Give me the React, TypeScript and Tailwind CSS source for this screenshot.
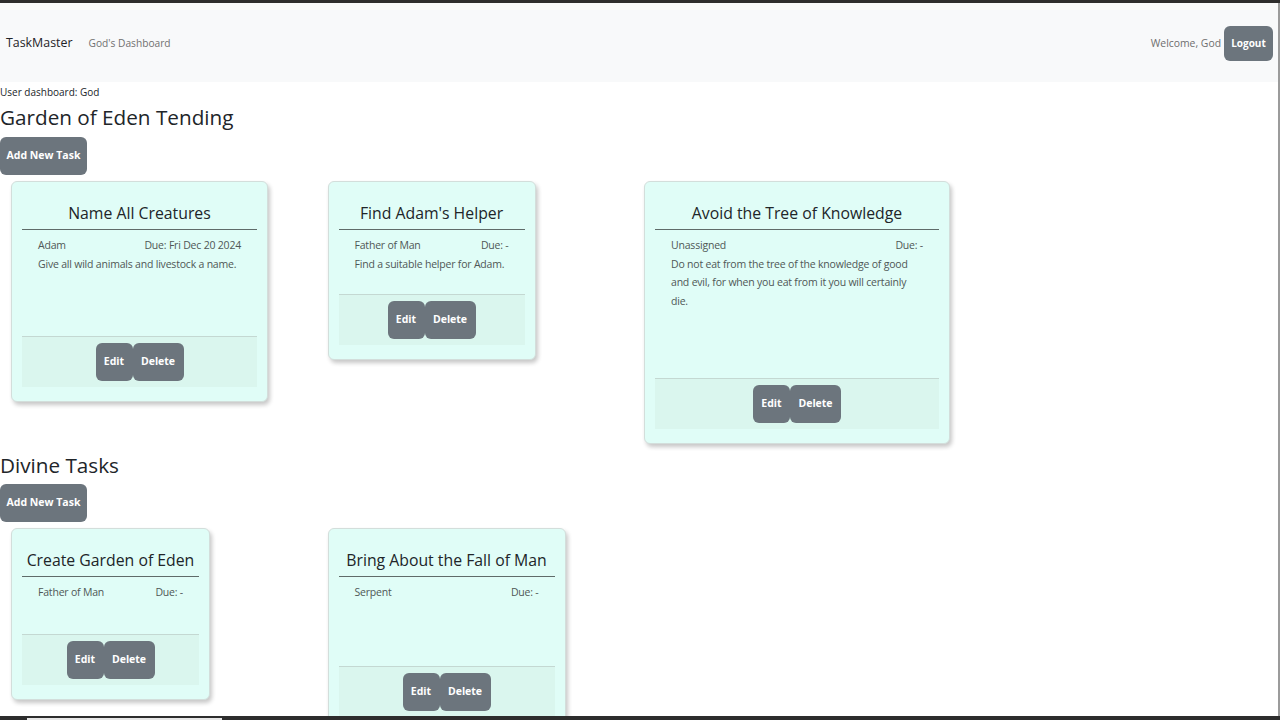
import React from 'react';

interface Task {
  title: string;
  assignee: string;
  due: string;
  description?: string;
  width: string;
  bodyHeight: string;
}

const gardenTasks: Task[] = [
  {
    title: 'Name All Creatures',
    assignee: 'Adam',
    due: 'Due: Fri Dec 20 2024',
    description: 'Give all wild animals and livestock a name.',
    width: 'w-[257px]',
    bodyHeight: 'h-[106px]',
  },
  {
    title: "Find Adam's Helper",
    assignee: 'Father of Man',
    due: 'Due: -',
    description: 'Find a suitable helper for Adam.',
    width: 'w-[208px]',
    bodyHeight: 'h-[64px]',
  },
  {
    title: 'Avoid the Tree of Knowledge',
    assignee: 'Unassigned',
    due: 'Due: -',
    description:
      'Do not eat from the tree of the knowledge of good and evil, for when you eat from it you will certainly die.',
    width: 'w-[306px]',
    bodyHeight: 'h-[148px]',
  },
];

const divineTasks: Task[] = [
  {
    title: 'Create Garden of Eden',
    assignee: 'Father of Man',
    due: 'Due: -',
    width: 'w-[199px]',
    bodyHeight: 'h-[57px]',
  },
  {
    title: 'Bring About the Fall of Man',
    assignee: 'Serpent',
    due: 'Due: -',
    width: 'w-[238px]',
    bodyHeight: 'h-[89px]',
  },
];

const TaskCard: React.FC<{ task: Task }> = ({ task }) => {
  return (
    <div
      className={`${task.width} bg-[#e0fdf7] border border-[#d3dedb] rounded-[6px] px-[10px] pt-[10px] pb-[14px] shadow-[2px_3px_4px_rgba(0,0,0,0.22)]`}
    >
      <h4 className="text-center text-[15.8px] leading-[24px] text-[#212529] pt-[9px] pb-[4px] border-b border-[#5f6b69] whitespace-nowrap">
        {task.title}
      </h4>
      <div
        className={`${task.bodyHeight} px-[16px] pt-[6px] text-[10.5px] leading-[18.5px] tracking-[-0.2px] text-[#4f5756]`}
      >
        <div className="flex justify-between">
          <span>{task.assignee}</span>
          <span>{task.due}</span>
        </div>
        {task.description && <p>{task.description}</p>}
      </div>
      <div className="border-t border-[#c4d8d2] bg-[#daf6ee] pt-[6px] pb-[6px] flex justify-center">
        <button className="h-[38px] w-[37px] rounded-[6px] bg-[#6c757d] text-white font-bold text-[10.5px]">
          Edit
        </button>
        <button className="h-[38px] w-[51px] rounded-[6px] bg-[#6c757d] text-white font-bold text-[10.5px]">
          Delete
        </button>
      </div>
    </div>
  );
};

const TaskRow: React.FC<{ tasks: Task[] }> = ({ tasks }) => (
  <div className="mt-[6px] grid grid-cols-[repeat(4,316.5px)] items-start">
    {tasks.map((task) => (
      <div key={task.title} className="pl-[11px]">
        <TaskCard task={task} />
      </div>
    ))}
  </div>
);

const AddButton = () => (
  <button className="h-[38px] w-[87px] rounded-[6px] bg-[#6c757d] text-white font-bold text-[10.5px]">
    Add New Task
  </button>
);

export default function App() {
  return (
    <div className="h-screen flex flex-col overflow-hidden bg-white border-t-[3px] border-[#2d2d2d] font-['Open_Sans',sans-serif]">
      <div className="flex-1 flex flex-col overflow-hidden border-r-2 border-[#9b9b9b]">
        <nav className="h-[79px] shrink-0 bg-[#f8f9fa] flex items-center justify-between pl-[6px] pr-[5px] pt-[2px]">
          <div className="flex items-center">
            <span className="text-[12.4px] text-[#1f2328]">TaskMaster</span>
            <span className="ml-[16px] text-[10.2px] text-[#707070]">God's Dashboard</span>
          </div>
          <div className="flex items-center">
            <span className="text-[10.4px] text-[#6e6e6e] mr-[3px]">Welcome, God</span>
            <button className="h-[35px] w-[49px] rounded-[6px] bg-[#6c757d] text-white font-bold text-[10px]">
              Logout
            </button>
          </div>
        </nav>

        <main className="flex-1 overflow-hidden text-[#212529]">
          <p className="pt-[1px] text-[10px] leading-[19px]">User dashboard: God</p>

          <h2 className="mt-[1px] mb-[6px] text-[20.7px] leading-[28px]">Garden of Eden Tending</h2>
          <AddButton />
          <TaskRow tasks={gardenTasks} />

          <h2 className="mt-[7px] mb-[5px] text-[20.7px] leading-[28px]">Divine Tasks</h2>
          <AddButton />
          <TaskRow tasks={divineTasks} />
        </main>
      </div>
      <div className="h-[4px] shrink-0 bg-[#2d2d2d] flex items-end">
        <div className="ml-[27px] w-[195px] h-[2px] bg-[#e6e6e6]" />
      </div>
    </div>
  );
}
